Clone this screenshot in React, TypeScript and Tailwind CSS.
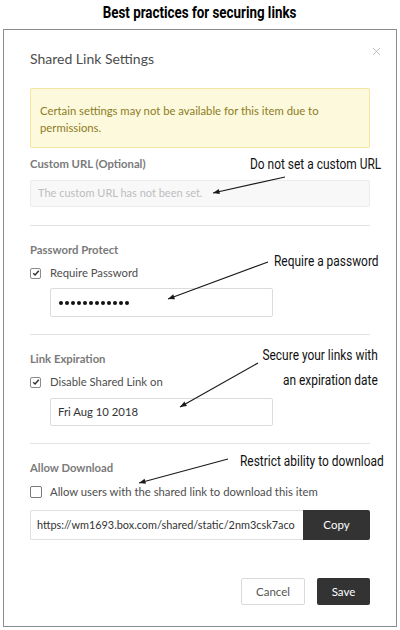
import { X } from 'lucide-react'

function CheckBox({ checked }: { checked: boolean }) {
  return (
    <span className="w-[11px] h-[11px] border border-[#8a8a8a] rounded-[2px] flex items-center justify-center bg-white shrink-0">
      {checked && (
        <svg width="8" height="8" viewBox="0 0 8 8">
          <path d="M1.2 4.2 L3.1 6 L6.8 1.8" fill="none" stroke="#333" strokeWidth="1.5" />
        </svg>
      )}
    </span>
  )
}

function Arrow({ x1, y1, x2, y2 }: { x1: number; y1: number; x2: number; y2: number }) {
  const a = Math.atan2(y2 - y1, x2 - x1)
  const len = 7
  const s = 0.38
  const p1 = `${x2 - len * Math.cos(a - s)},${y2 - len * Math.sin(a - s)}`
  const p2 = `${x2 - len * Math.cos(a + s)},${y2 - len * Math.sin(a + s)}`
  return (
    <g>
      <line x1={x1} y1={y1} x2={x2} y2={y2} stroke="#1a1a1a" strokeWidth="1.2" />
      <polygon points={`${x2},${y2} ${p1} ${p2}`} fill="#1a1a1a" />
    </g>
  )
}

export default function App() {
  const note =
    "absolute text-[15.5px] leading-[20px] text-[#111] whitespace-nowrap font-['Roboto',sans-serif] scale-x-[0.77]"

  return (
    <div className="relative w-[400px] h-[630px] bg-white overflow-hidden font-['Lato',sans-serif]">
      <div className="h-[27px] flex items-center justify-center">
        <span className="text-[16.5px] font-bold text-black font-['Roboto',sans-serif] scale-x-[0.81]">
          Best practices for securing links
        </span>
      </div>

      <div className="relative mx-[3px] mt-[2px] h-[598px] border border-[#8c8c8c] px-[26px] pt-[19px]">
        <X className="absolute right-[13px] top-[15px] text-[#aaaaaa]" size={13} strokeWidth={1.4} />
        <div className="text-[14px] leading-[20px] text-[#4d4d4d]">Shared Link Settings</div>

        <div className="mt-[19px] h-[60px] border border-[#f2e6a0] bg-[#fdf9dc] rounded-[2px] px-[9px] pt-[13px] text-[11.3px] leading-[17px] text-[#8c7c26]">
          Certain settings may not be available for this item due to permissions.
        </div>

        <div className="mt-[8px] text-[11.3px] leading-[16px] font-bold text-[#7a7a7a]">Custom URL (Optional)</div>
        <div className="mt-[8px] h-[27px] border border-[#ececec] bg-[#f8f8f8] rounded-[2px] px-[7px] flex items-center text-[11px] text-[#bdbdbd]">
          The custom URL has not been set.
        </div>

        <div className="mt-[18px] h-px bg-[#e3e3e3]" />

        <div className="mt-[16px] text-[11.3px] leading-[16px] font-bold text-[#7a7a7a]">Password Protect</div>
        <div className="mt-[6px] h-[18px] flex items-center gap-[9px] text-[11.3px] text-[#4d4d4d]">
          <CheckBox checked />
          <span>Require Password</span>
        </div>
        <div className="mt-[6px] ml-[20px] w-[223px] h-[29px] border border-[#dcdcdc] rounded-[2px] bg-white px-[8px] flex items-center gap-[2px]">
          {Array.from({ length: 12 }).map((_, i) => (
            <span key={i} className="w-[4px] h-[4px] rounded-full bg-[#111]" />
          ))}
        </div>

        <div className="mt-[17px] h-px bg-[#e3e3e3]" />

        <div className="mt-[16px] text-[11.3px] leading-[16px] font-bold text-[#7a7a7a]">Link Expiration</div>
        <div className="mt-[6px] h-[18px] flex items-center gap-[9px] text-[11.3px] text-[#4d4d4d]">
          <CheckBox checked />
          <span>Disable Shared Link on</span>
        </div>
        <div className="mt-[7px] ml-[20px] w-[223px] h-[28px] border border-[#dcdcdc] rounded-[2px] bg-white px-[7px] flex items-center text-[11.3px] text-[#333]">
          Fri Aug 10 2018
        </div>

        <div className="mt-[17px] h-px bg-[#e3e3e3]" />

        <div className="mt-[16px] text-[11.3px] leading-[16px] font-bold text-[#7a7a7a]">Allow Download</div>
        <div className="mt-[7px] h-[18px] flex items-center gap-[8px] text-[11.3px] text-[#4d4d4d]">
          <span className="w-[12px] h-[12px] border border-[#7a7a7a] rounded-[2px] bg-white shrink-0" />
          <span>Allow users with the shared link to download this item</span>
        </div>
        <div className="mt-[9px] h-[30px] flex">
          <div className="w-[273px] border border-[#e0e0e0] border-r-0 rounded-l-[2px] px-[6px] flex items-center text-[10.9px] text-[#333] overflow-hidden whitespace-nowrap">
            https://wm1693.box.com/shared/static/2nm3csk7aco
          </div>
          <button className="flex-1 bg-[#333] text-white text-[11.5px] rounded-r-[2px]">Copy</button>
        </div>

        <div className="mt-[38px] flex justify-end gap-[12px]">
          <button className="w-[64px] h-[27px] border border-[#d9d9d9] rounded-[2px] bg-white text-[11.5px] text-[#555]">Cancel</button>
          <button className="w-[53px] h-[27px] rounded-[2px] bg-[#333] text-[11.5px] text-white">Save</button>
        </div>
      </div>

      <div className={`${note} left-[250px] top-[154px] origin-left`}>Do not set a custom URL</div>
      <div className={`${note} left-[274px] top-[251px] origin-left`}>Require a password</div>
      <div className={`${note} right-[22px] top-[343px] text-right leading-[25px] origin-right`}>
        Secure your links with
        <br />
        an expiration date
      </div>
      <div className={`${note} left-[240px] top-[451px] origin-left`}>Restrict ability to download</div>

      <svg className="absolute inset-0 pointer-events-none" width="400" height="630" viewBox="0 0 400 630">
        <Arrow x1={285} y1={177} x2={213} y2={193} />
        <Arrow x1={268} y1={262} x2={168} y2={299} />
        <Arrow x1={258} y1={363} x2={180} y2={407} />
        <Arrow x1={228} y1={459} x2={139} y2={483} />
      </svg>
    </div>
  )
}
